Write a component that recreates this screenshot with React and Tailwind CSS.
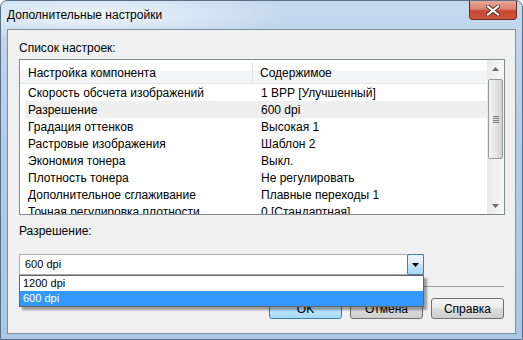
const rows = [
  ["Скорость обсчета изображений", "1 BPP [Улучшенный]"],
  ["Разрешение", "600 dpi"],
  ["Градация оттенков", "Высокая 1"],
  ["Растровые изображения", "Шаблон 2"],
  ["Экономия тонера", "Выкл."],
  ["Плотность тонера", "Не регулировать"],
  ["Дополнительное сглаживание", "Плавные переходы 1"],
  ["Точная регулировка плотности", "0 [Стандартная]"],
];

const CloseButton = () => (
  <div className="w-[48px] h-[19px] mr-[5px] rounded-b-[4px] border border-t-0 border-[#6d2a1f] bg-[linear-gradient(to_bottom,#e7a99b_0%,#d9826f_45%,#c8462f_55%,#d0573f_100%)] flex items-center justify-center">
    <svg width="14" height="11" viewBox="0 0 14 11">
      <path d="M2 1.5 L12 9.5 M12 1.5 L2 9.5" stroke="#5b2418" strokeWidth="4" strokeLinecap="square" />
      <path d="M2 1.5 L12 9.5 M12 1.5 L2 9.5" stroke="#ffffff" strokeWidth="2.2" strokeLinecap="square" />
    </svg>
  </div>
);

const Arrow = ({ up }) => (
  <svg width="7" height="4" viewBox="0 0 7 4">
    <path d={up ? "M0 4 L3.5 0 L7 4 Z" : "M0 0 L7 0 L3.5 4 Z"} fill="#6a6a6a" />
  </svg>
);

const ScrollBar = () => (
  <div className="w-[17px] h-full flex flex-col bg-[linear-gradient(to_right,#e9e9e9,#f7f7f7)]">
    <div className="h-[17px] shrink-0 flex items-center justify-center">
      <Arrow up />
    </div>
    <div className="mt-[2px] ml-[1px] w-[15px] h-[80px] shrink-0 rounded-[2px] border border-[#9b9b9b] bg-[linear-gradient(to_right,#f4f4f4,#e6e6e6_50%,#d2d2d2)] flex flex-col items-center justify-center gap-[1px]">
      <div className="w-[6px] h-[1px] bg-[#7b7b7b]" />
      <div className="w-[6px] h-[1px] bg-[#7b7b7b]" />
      <div className="w-[6px] h-[1px] bg-[#7b7b7b]" />
      <div className="w-[6px] h-[1px] bg-[#7b7b7b]" />
    </div>
    <div className="flex-1" />
    <div className="h-[17px] shrink-0 flex items-center justify-center">
      <Arrow />
    </div>
  </div>
);

const SettingsList = () => (
  <div className="w-[486px] h-[156px] border border-[#828790] bg-white flex overflow-hidden">
    <div className="flex-1 flex flex-col overflow-hidden">
      <div className="h-[24px] shrink-0 flex items-center pt-[2px] border-b border-[#e3e6ea] bg-[linear-gradient(to_bottom,#ffffff_0%,#ffffff_45%,#f4f5f7_46%,#f4f5f7_100%)]">
        <div className="w-[233px] h-full flex items-center pl-[8px] border-r border-[#dde2e8]">Настройка компонента</div>
        <div className="pl-[7px]">Содержимое</div>
      </div>
      {rows.map(([name, value], i) => (
        <div
          key={name}
          className={
            i === 1
              ? "ml-[5px] h-[17px] shrink-0 flex items-center bg-[#efefef]"
              : "ml-[5px] h-[17px] shrink-0 flex items-center"
          }
        >
          <div className="w-[233px] pl-[3px] whitespace-nowrap">{name}</div>
          <div className="pl-[3px] whitespace-nowrap">{value}</div>
        </div>
      ))}
    </div>
    <ScrollBar />
  </div>
);

const Combo = () => (
  <div className="relative w-[405px] h-[21px] mt-[16px]">
    <div className="w-full h-full border border-[#abadb3] bg-white flex items-center text-[11px] pl-[5px]">600 dpi</div>
    <div className="absolute right-0 top-0 w-[17px] h-[21px] rounded-[2px] border border-[#3c7fb1] bg-[linear-gradient(to_bottom,#eaf6fd,#d9f0fc_45%,#bee6fd_50%,#a7d9f5)] flex items-center justify-center">
      <svg width="7" height="4" viewBox="0 0 7 4">
        <path d="M0 0 L7 0 L3.5 4 Z" fill="#000" />
      </svg>
    </div>
    <div className="absolute left-0 top-full w-full border border-[#646464] bg-white text-[11px] shadow-[3px_3px_2px_rgba(0,0,0,0.35)] z-10">
      <div className="h-[15px] flex items-center pl-[3px]">1200 dpi</div>
      <div className="h-[15px] flex items-center pl-[3px] bg-[#3399ff] text-white">600 dpi</div>
    </div>
  </div>
);

const Button = ({ children, primary }) => (
  <div
    className={
      primary
        ? "w-[73px] h-[21px] rounded-[3px] border border-[#3c7fb1] bg-[linear-gradient(to_bottom,#eaf6fd,#d9f0fc_45%,#bee6fd_50%,#a7d9f5)] flex items-center justify-center"
        : "w-[73px] h-[21px] rounded-[3px] border border-[#707070] bg-[linear-gradient(to_bottom,#f2f2f2,#ebebeb_45%,#dddddd_50%,#cfcfcf)] flex items-center justify-center"
    }
  >
    {children}
  </div>
);

export default function App() {
  return (
    <div className="w-[523px] h-[340px] bg-white font-['Liberation_Sans',Arial,sans-serif] text-[12px] text-black">
      <div className="w-full h-full rounded-t-[7px] border border-[#5d6f84] bg-[radial-gradient(ellipse_200px_26px_at_90px_14px,rgba(255,255,255,0.75),rgba(255,255,255,0)),linear-gradient(to_bottom,#c4d9ee,#b2cdea_40%,#a9c7e7)] flex flex-col">
        <div className="h-[28px] flex items-start justify-between">
          <div className="pl-[6px] pt-[7px] leading-[14px]">Дополнительные настройки</div>
          <CloseButton />
        </div>
        <div className="mx-[6px] h-[305px] border border-[#7f8c9b] bg-[#f0f0f0] flex flex-col pl-[11px]">
          <div className="mt-[11px] leading-[14px]">Список настроек:</div>
          <div className="mt-[4px]">
            <SettingsList />
          </div>
          <div className="mt-[9px] leading-[14px]">Разрешение:</div>
          <Combo />
          <div className="mt-[11px] w-[485px] h-[1px] bg-[#a0a0a0]" />
          <div className="mt-[11px] w-[485px] flex justify-end gap-[8px]">
            <Button primary>OK</Button>
            <Button>Отмена</Button>
            <Button>Справка</Button>
          </div>
        </div>
      </div>
    </div>
  );
}
